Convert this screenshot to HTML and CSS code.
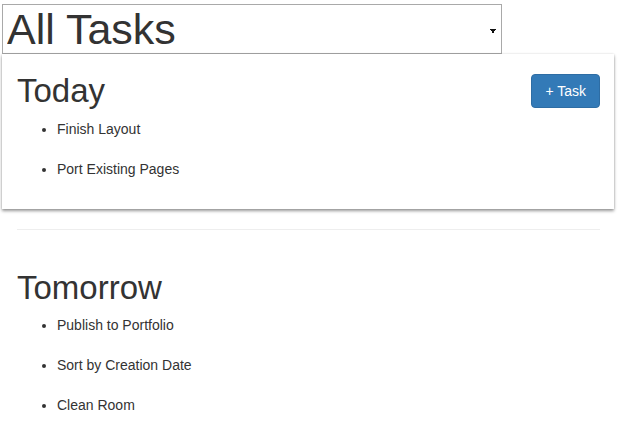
FILE: index.html
```html
<!DOCTYPE html>
<html lang="en">
<head>
<meta charset="utf-8">
<title>All Tasks</title>
<link rel="stylesheet" href="styles.css">
</head>
<body>
<div class="page">
  <select class="filter" aria-label="Filter tasks">
    <option>All Tasks</option>
  </select>

  <section class="card">
    <div class="group-head">
      <h2 class="group-title">Today</h2>
      <button class="btn-primary" type="button">+ Task</button>
    </div>
    <ul class="task-list">
      <li>Finish Layout</li>
      <li>Port Existing Pages</li>
    </ul>
  </section>

  <div class="content">
    <hr class="divider">
    <section class="group">
      <h2 class="group-title">Tomorrow</h2>
      <ul class="task-list">
        <li>Publish to Portfolio</li>
        <li>Sort by Creation Date</li>
        <li>Clean Room</li>
      </ul>
    </section>
  </div>
</div>
</body>
</html>
```

FILE: styles.css
```css
* { box-sizing: border-box; }

html, body {
  margin: 0;
  padding: 0;
  background: #fff;
}

body {
  font-family: "Liberation Sans", Arial, Helvetica, sans-serif;
  font-size: 14px;
  line-height: 20px;
  color: #333;
}

.page {
  width: 613px;
  margin-left: 2px;
  padding-top: 4px;
}

.filter {
  display: block;
  width: 500px;
  height: 50px;
  margin: 0;
  padding: 0 20px 0 4px;
  border: 1px solid #a9a9a9;
  border-radius: 0;
  background-color: #fff;
  color: #333;
  font-family: "Liberation Sans", Arial, sans-serif;
  font-size: 43px;
  line-height: 48px;
  -webkit-appearance: none;
  appearance: none;
  background-image:
    linear-gradient(to top right, transparent 50%, #111 50%),
    linear-gradient(to bottom right, #111 50%, transparent 50%);
  background-repeat: no-repeat;
  background-size: 3px 5px, 3px 5px;
  background-position: 487px 24px, 490px 24px;
}

.card {
  width: 612px;
  padding: 20px 14px 10px 15px;
  background: #fff;
  box-shadow: 0 2px 3px rgba(0, 0, 0, 0.4), 0 0 2px rgba(0, 0, 0, 0.12);
}

.group-head {
  display: flex;
  justify-content: space-between;
  align-items: flex-start;
}

.group-title {
  margin: 0;
  font-size: 33px;
  line-height: 33px;
  font-weight: normal;
  color: #333;
}

.btn-primary {
  margin: 0;
  padding: 6px 13px;
  border: 1px solid #2e6da4;
  border-radius: 4px;
  background: #337ab7;
  color: #fff;
  font-family: "Liberation Sans", Arial, sans-serif;
  font-size: 14px;
  line-height: 20px;
  cursor: pointer;
}

.task-list {
  margin: 11px 0 0;
  padding-left: 40px;
}

.task-list li {
  line-height: 20px;
  margin-bottom: 20px;
}

.content {
  padding: 0 15px;
}

.divider {
  margin: 20px 0;
  border: 0;
  border-top: 1px solid #eee;
  height: 0;
}

.group {
  padding-top: 21px;
}
```
